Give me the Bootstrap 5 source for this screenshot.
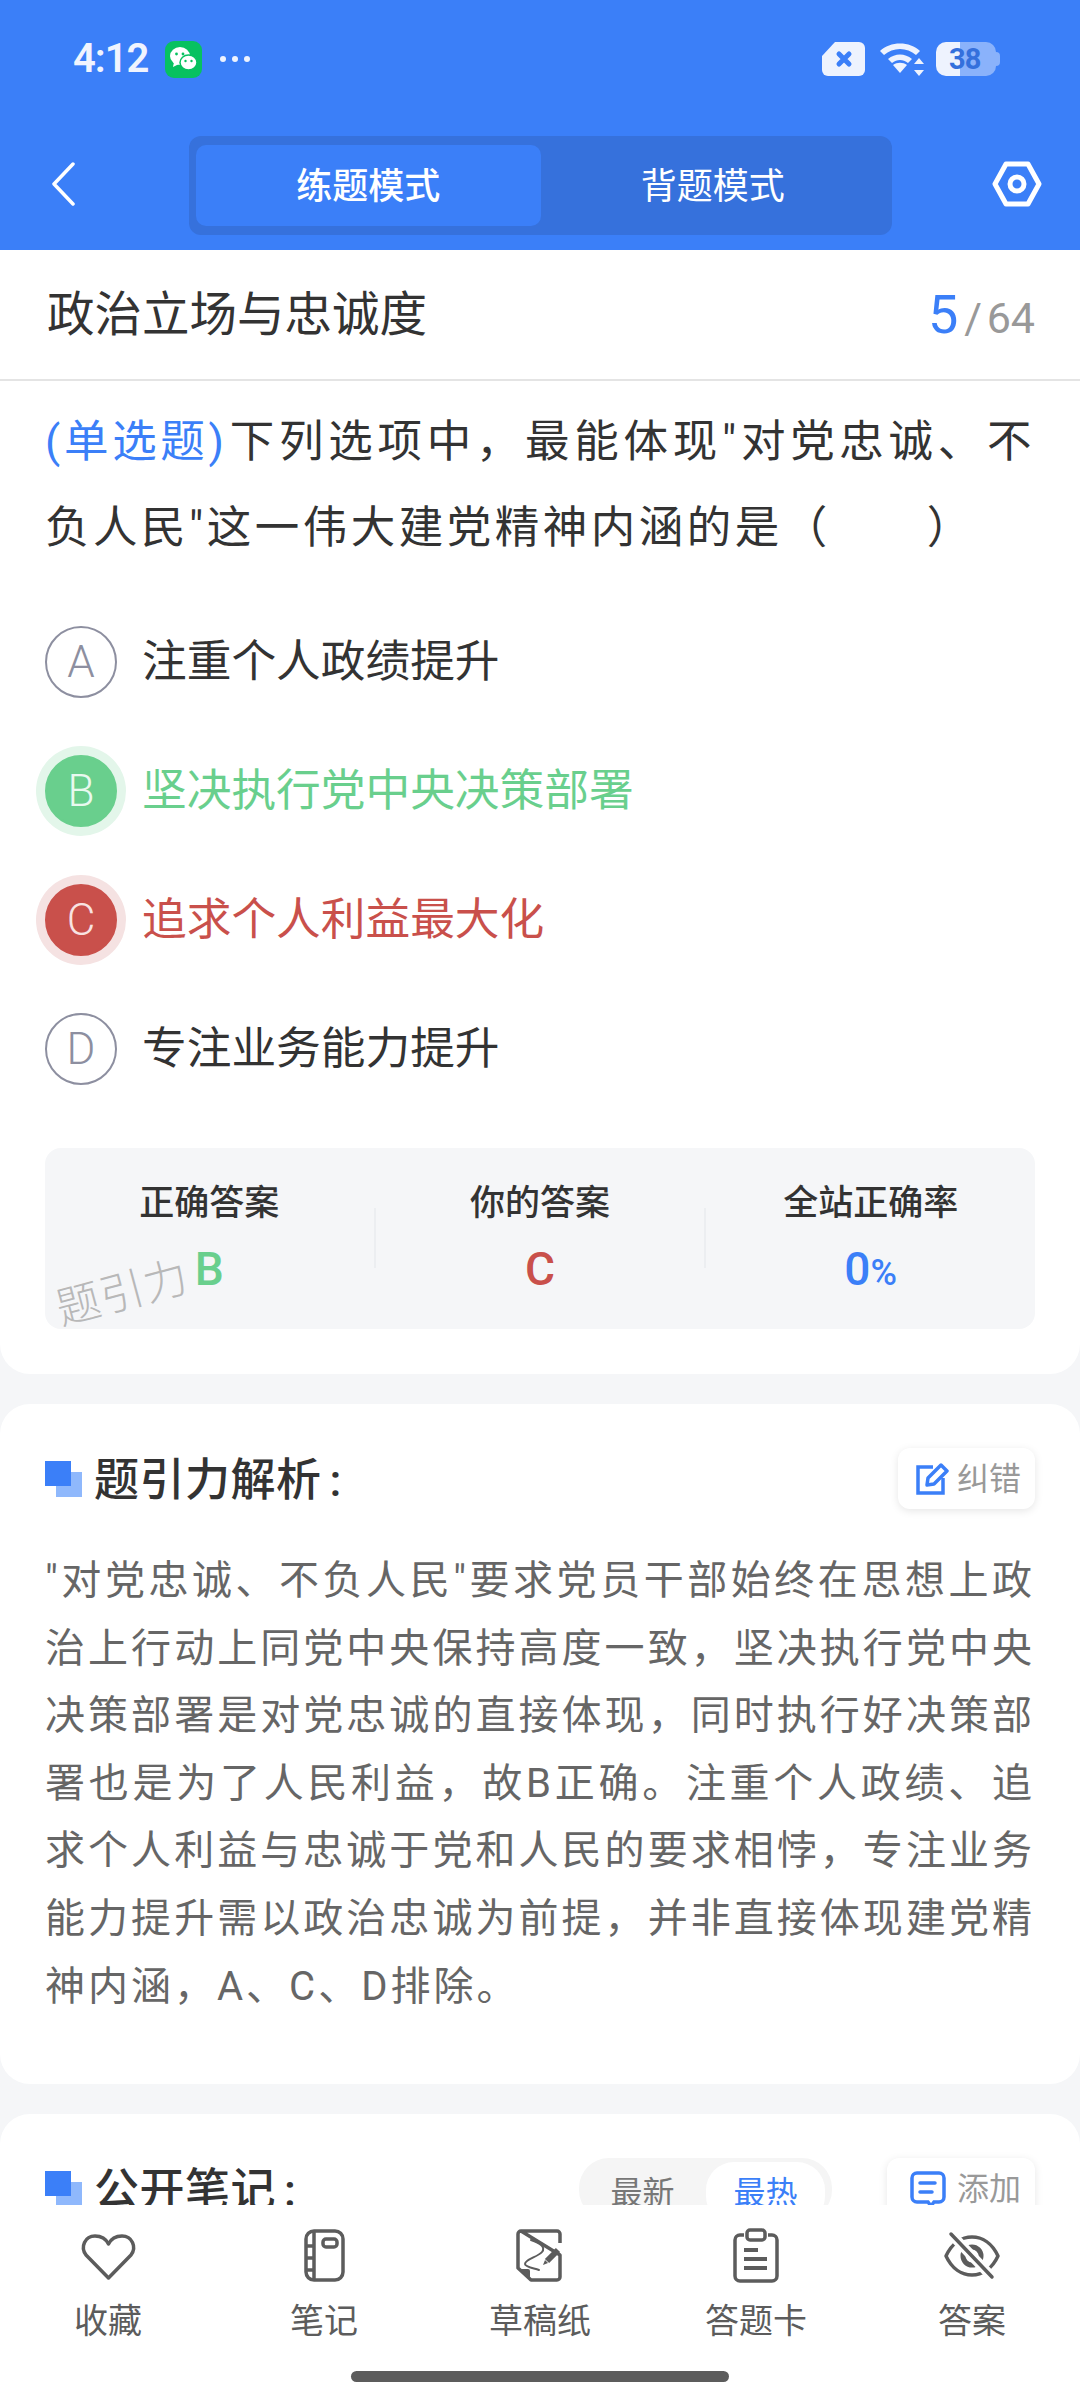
<!DOCTYPE html>
<html lang="zh-CN">
<head>
  <meta charset="UTF-8">
  <title>题引力 - 练题模式</title>
  <link href="https://cdn.jsdelivr.net/npm/bootstrap@5.3.3/dist/css/bootstrap.min.css" rel="stylesheet">
  <style>
    body { background-color: #f5f6f8; color: #333; font-family: Roboto, "Noto Sans CJK SC", sans-serif; height: 2400px; width: 1080px; overflow: hidden; }
    .phone { height: 2400px; }

    /* header */
    .top-head { background-color: #3b7ff8; height: 250px; color: #fff; }
    .status-row { height: 118px; padding: 0 80px 0 73px; }
    .clock { font-size: 40px; font-weight: 600; letter-spacing: -1px; line-height: 1; margin-right: 17px; color: #f0f4fe; }
    .wx-tile { width: 37px; height: 37px; border-radius: 9px; background-color: #07c160; margin-right: 17px; }
    .wifi-ico { margin-left: 13px; }
    .batt-box { width: 60px; height: 34px; margin-left: 12px; border-radius: 10px; background: linear-gradient(90deg, #eef3fe 24px, #8ab2fb 24px); color: #3470dc; font-size: 29px; font-weight: 700; line-height: 34px; letter-spacing: -1px; padding-left: 13px; }
    .batt-nub { width: 4px; height: 14px; background-color: #8ab2fb; border-radius: 0 4px 4px 0; }
    .tool-row { height: 132px; }
    .back-slot { width: 189px; padding-left: 50px; }
    .gear-slot { width: 188px; padding-left: 100px; }
    .mode-seg { width: 703px; height: 99px; margin-top: 3px; padding: 9px 7px; background-color: #3671dc; border-radius: 12px; }
    .mode-tab { font-size: 36px; border-radius: 10px; color: #fff; padding-top: 2px; }
    .mode-on { background-color: #3b7ff8; font-weight: 500; }

    /* question card */
    .quiz-card { background-color: #fff; border-radius: 0 0 30px 30px; padding-bottom: 45px; }
    .topic-row { height: 131px; padding: 0 45px 0 47px; border-bottom: 2px solid #e4e4e4; }
    .topic-name { font-size: 47.500px; line-height: 1; padding-top: 2px; }
    .count-now { font-size: 54px; color: #3b7ff8; }
    .count-all { font-size: 43px; color: #999; margin-left: 6px; word-spacing: -6px; }
    .stem { font-size: 44.500px; line-height: 86px; padding: 18px 45px 0; letter-spacing: 3.500px; text-align: justify; }
    .stem-type { color: #3b7ff8; letter-spacing: 2.500px; margin-right: 2px; }
    .opt-list { margin-top: 26px; padding: 0 45px; }
    .opt-row { height: 129px; font-size: 44.700px; gap: 25px; }
    .opt-text { padding-top: 3px; }
    .opt-dot { width: 72px; height: 72px; border-radius: 50%; border: 2px solid #8d8fa0; color: #8d8fa0; font-size: 44px; font-weight: 300; flex: none; }
    .opt-right { color: #69cf8d; }
    .opt-right .opt-dot { background-color: #69cf8d; border-color: #69cf8d; color: #e9f9ef; box-shadow: 0 0 0 9px #e3f6ea; }
    .opt-wrong { color: #c9504b; }
    .opt-wrong .opt-dot { background-color: #c9504b; border-color: #c9504b; color: #f8e3e2; box-shadow: 0 0 0 9px #f5e2e2; }
    .stat-box { height: 181px; margin: 35px 45px 0; background-color: #f5f6f8; border-radius: 16px; }
    .stat-item { flex: 1 1 0; text-align: center; padding-top: 33px; }
    .stat-label { font-size: 35px; line-height: 46px; font-weight: 500; }
    .stat-value { font-size: 46px; line-height: 46px; margin-top: 19px; font-weight: 500; }
    .stat-rule { width: 2px; height: 60px; margin-top: 60px; background-color: #eceef1; }
    .pct { font-size: 36px; }
    .val-blue { color: #3b7ff8; }
    .val-green { color: #69cf8d; }
    .val-red { color: #c9504b; }
    .watermark { position: absolute; left: 10px; top: 123px; font-size: 44px; line-height: 1; color: #b8b8b8; font-weight: 300; letter-spacing: 1px; transform: rotate(-15deg); }

    /* analysis + notes */
    .info-card { background-color: #fff; border-radius: 30px; margin-top: 30px; padding: 44px 45px 64px; }
    .info-head { height: 61px; }
    .head-mark { position: relative; width: 37px; height: 36px; margin-right: 12px; flex: none; }
    .head-mark::before { content: ""; position: absolute; right: 0; bottom: 0; width: 26px; height: 25px; background-color: #8fb8fc; }
    .head-mark::after { content: ""; position: absolute; left: 0; top: 0; width: 26px; height: 25px; background-color: #3b7ff8; }
    .head-text { font-size: 45px; font-weight: 500; line-height: 1; letter-spacing: 0.500px; padding-top: 3px; }
    .mini-btn { background-color: #fff; border-radius: 12px; box-shadow: 0 2px 8px rgba(0, 0, 0, .1); color: #999; font-size: 32px; height: 61px; padding: 0 14px 0 17px; gap: 8px; }
    .mini-add { padding-left: 23px; gap: 11px; }
    .solve-text { font-size: 40px; line-height: 67.600px; color: #666; margin: 38px 0 0; letter-spacing: 3px; text-align: justify; }
    .sort-pill { background-color: #f5f5f5; border-radius: 30px; height: 62px; padding: 4px 7px 0 0; color: #777; font-size: 32px; margin-right: 55px; }
    .sort-item { width: 127px; height: 62px; border-radius: 28px; }
    .sort-on { width: 119px; background-color: #fff; color: #3b7ff8; }

    /* bottom bar */
    .bottom-bar { background-color: #fff; height: 195px; flex: none; position: relative; }
    .bar-item { flex: 1 1 0; padding-top: 23px; color: #5c5c5c; }
    .bar-icon { display: block; width: 64px; height: 56px; margin: 0 auto; }
    .bar-label { font-size: 34px; line-height: 46px; margin-top: 14px; }
    .home-line { width: 378px; height: 11px; margin: 27px auto 0; background-color: #5c5c5c; border-radius: 6px; }
    .scroll-zone { overflow: hidden; min-height: 0; }
  </style>
</head>
<body>
  <div class="phone d-flex flex-column">

    <!-- Header -->
    <div class="top-head flex-shrink-0">
      <div class="status-row d-flex align-items-center">
        <span class="clock">4:12</span>
        <span class="wx-tile d-flex align-items-center justify-content-center">
          <svg width="29" height="27" viewBox="0 0 29 27"><ellipse cx="11" cy="10" rx="10" ry="9" fill="#fff"/><path d="M5 16l-1 5 6-3z" fill="#fff"/><ellipse cx="19.500" cy="16.500" rx="8.500" ry="7.500" fill="#fff" stroke="#07c160" stroke-width="1.500"/><circle cx="7.500" cy="8" r="1.400" fill="#07c160"/><circle cx="14" cy="8" r="1.400" fill="#07c160"/><circle cx="16.500" cy="15" r="1.200" fill="#07c160"/><circle cx="22.500" cy="15" r="1.200" fill="#07c160"/></svg>
        </span>
        <svg width="32" height="8" viewBox="0 0 32 8"><circle cx="4" cy="4" r="3" fill="#eef3fe"/><circle cx="16" cy="4" r="3" fill="#eef3fe"/><circle cx="28" cy="4" r="3" fill="#eef3fe"/></svg>
        <span class="ms-auto d-flex align-items-center">
          <svg width="43" height="34" viewBox="0 0 43 34"><path d="M13 0H37a6 6 0 0 1 6 6V28a6 6 0 0 1-6 6H6a6 6 0 0 1-6-6V14z" fill="#eef3fe"/><path d="M16 11l10 10M26 11l-10 10" stroke="#3b7ff8" stroke-width="5" stroke-linecap="round" transform="translate(1 1)"/></svg>
          <svg class="wifi-ico" width="46" height="34" viewBox="0 0 46 34"><path d="M2 9C12-1 32-1 42 9l-4 4C29 5 15 5 6 13z" fill="#eef3fe"/><path d="M10 17c7-6 17-6 24 0l-4 4c-5-4-11-4-16 0z" fill="#eef3fe"/><path d="M15 23c4-3 10-3 14 0l-7 8z" fill="#eef3fe"/><path d="M41 16l5 6H36zM41 34l5-6H36z" fill="#eef3fe"/></svg>
          <span class="batt-box">38</span><span class="batt-nub"></span>
        </span>
      </div>
      <div class="tool-row d-flex align-items-center">
        <div class="back-slot">
          <svg width="26" height="44" viewBox="0 0 26 44" class="d-block"><path d="M23 2L4 22l19 20" fill="none" stroke="#fff" stroke-width="3.500" stroke-linecap="round" stroke-linejoin="round"/></svg>
        </div>
        <div class="mode-seg d-flex">
          <div class="mode-tab mode-on flex-fill w-50 d-flex align-items-center justify-content-center">练题模式</div>
          <div class="mode-tab flex-fill w-50 d-flex align-items-center justify-content-center">背题模式</div>
        </div>
        <div class="gear-slot">
          <svg width="50" height="46" viewBox="0 0 50 46" class="d-block"><path d="M14 3H36L47 23 36 43H14L3 23z" fill="none" stroke="#fff" stroke-width="5" stroke-linejoin="round"/><circle cx="25" cy="23" r="7" fill="none" stroke="#fff" stroke-width="5"/></svg>
        </div>
      </div>
    </div>

    <!-- Scrolling content -->
    <div class="scroll-zone flex-grow-1">
      <div class="quiz-card">
        <div class="topic-row d-flex align-items-center justify-content-between">
          <div class="topic-name">政治立场与忠诚度</div>
          <div><span class="count-now">5</span><span class="count-all">/ 64</span></div>
        </div>
        <div class="stem"><span class="stem-type">(单选题)</span>下列选项中，最能体现"对党忠诚、不负人民"这一伟大建党精神内涵的是（　　）</div>
        <div class="opt-list">
          <div class="opt-row d-flex align-items-center"><span class="opt-dot d-flex align-items-center justify-content-center">A</span><span class="opt-text">注重个人政绩提升</span></div>
          <div class="opt-row opt-right d-flex align-items-center"><span class="opt-dot d-flex align-items-center justify-content-center">B</span><span class="opt-text">坚决执行党中央决策部署</span></div>
          <div class="opt-row opt-wrong d-flex align-items-center"><span class="opt-dot d-flex align-items-center justify-content-center">C</span><span class="opt-text">追求个人利益最大化</span></div>
          <div class="opt-row d-flex align-items-center"><span class="opt-dot d-flex align-items-center justify-content-center">D</span><span class="opt-text">专注业务能力提升</span></div>
        </div>
        <div class="stat-box d-flex position-relative">
          <div class="stat-item"><div class="stat-label">正确答案</div><div class="stat-value val-green">B</div></div>
          <div class="stat-rule"></div>
          <div class="stat-item"><div class="stat-label">你的答案</div><div class="stat-value val-red">C</div></div>
          <div class="stat-rule"></div>
          <div class="stat-item"><div class="stat-label">全站正确率</div><div class="stat-value val-blue">0<span class="pct">%</span></div></div>
          <div class="watermark">题引力</div>
        </div>
      </div>

      <div class="info-card">
        <div class="info-head d-flex align-items-center">
          <span class="head-mark"></span>
          <span class="head-text">题引力解析<span class="ms-2">:</span></span>
          <span class="mini-btn d-flex align-items-center ms-auto">
            <svg width="34" height="34" viewBox="0 0 34 34"><path d="M18 5H3V31H28V16" fill="none" stroke="#3b7ff8" stroke-width="3.500"/><path d="M12 23l1-7L26 3l6 6-13 13z" fill="none" stroke="#3b7ff8" stroke-width="3.500" stroke-linejoin="round"/></svg>
            纠错
          </span>
        </div>
        <p class="solve-text">"对党忠诚、不负人民"要求党员干部始终在思想上政治上行动上同党中央保持高度一致，坚决执行党中央决策部署是对党忠诚的直接体现，同时执行好决策部署也是为了人民利益，故B正确。注重个人政绩、追求个人利益与忠诚于党和人民的要求相悖，专注业务能力提升需以政治忠诚为前提，并非直接体现建党精神内涵，A、C、D排除。</p>
      </div>

      <div class="info-card">
        <div class="info-head d-flex align-items-center">
          <span class="head-mark"></span>
          <span class="head-text">公开笔记<span class="ms-2">:</span></span>
          <span class="sort-pill d-flex ms-auto">
            <span class="sort-item d-flex align-items-center justify-content-center">最新</span>
            <span class="sort-item sort-on d-flex align-items-center justify-content-center">最热</span>
          </span>
          <span class="mini-btn mini-add d-flex align-items-center">
            <svg width="36" height="36" viewBox="0 0 36 36"><path d="M7 2H29a5 5 0 0 1 5 5V26a5 5 0 0 1-5 5H24l-3 4-3-4H7a5 5 0 0 1-5-5V7a5 5 0 0 1 5-5z" fill="none" stroke="#3b7ff8" stroke-width="3.500"/><path d="M10 12H25M10 21H22" stroke="#3b7ff8" stroke-width="3.500" stroke-linecap="round"/></svg>
            添加
          </span>
        </div>
      </div>
    </div>

    <!-- Bottom bar -->
    <div class="bottom-bar">
      <div class="d-flex">
        <div class="bar-item text-center">
          <svg class="bar-icon" viewBox="0 0 64 56"><path d="M32.500 50L10 27C4 19 9 8 19 8c6 0 11 3 13.500 8C35 11 40 8 46 8c10 0 15 11 9 19z" fill="none" stroke="#5c5c5c" stroke-width="3.500" stroke-linejoin="round"/></svg>
          <div class="bar-label">收藏</div>
        </div>
        <div class="bar-item text-center">
          <svg class="bar-icon" viewBox="0 0 64 56" fill="none" stroke="#5c5c5c" stroke-width="3.500"><rect x="14" y="3" width="37" height="49" rx="8"/><path d="M22 3V52M14 18H22M14 30H22M14 42H22"/><rect x="31" y="11" width="14" height="8" rx="3"/></svg>
          <div class="bar-label">笔记</div>
        </div>
        <div class="bar-item text-center">
          <svg class="bar-icon" viewBox="0 0 64 56" fill="none" stroke="#5c5c5c" stroke-width="3.500"><path d="M13 3H49a3 3 0 0 1 3 3V15M52 27V49a3 3 0 0 1-3 3H23L10 40V6a3 3 0 0 1 3-3z" stroke-linejoin="round"/><path d="M11 41H20a2 2 0 0 1 2 2V51z" fill="#5c5c5c" stroke="none"/><path d="M23 12C32 15 38 19 34 24 30 29 17 31 17 36c0 3 8 4 14 6" stroke-width="2" stroke-linecap="round"/><path d="M39 33L50 22" stroke-width="6"/><path d="M37 32l3 3-5 2z" fill="#5c5c5c" stroke="none"/></svg>
          <div class="bar-label">草稿纸</div>
        </div>
        <div class="bar-item text-center">
          <svg class="bar-icon" viewBox="0 0 64 56" fill="none" stroke="#5c5c5c" stroke-width="3.500"><path d="M20 7H16a5 5 0 0 0-5 5V48a5 5 0 0 0 5 5H48a5 5 0 0 0 5-5V12a5 5 0 0 0-5-5H44"/><rect x="23" y="2" width="18" height="10" rx="3"/><path d="M20 22H34M20 31H43M20 40H43" stroke-width="4"/></svg>
          <div class="bar-label">答题卡</div>
        </div>
        <div class="bar-item text-center">
          <svg class="bar-icon" viewBox="0 0 64 56" fill="none" stroke="#5c5c5c" stroke-width="3.500"><path d="M6 28C12 15 22 9 32 9s20 6 26 19C52 41 42 47 32 47S12 41 6 28z" stroke-linejoin="round"/><circle cx="32" cy="28" r="9" stroke-width="5"/><path d="M11 6L52 49" stroke="#fff" stroke-width="10"/><path d="M11 6L52 49" stroke-width="3.500" stroke-linecap="round"/></svg>
          <div class="bar-label">答案</div>
        </div>
      </div>
      <div class="home-line"></div>
    </div>
  </div>

  <script src="https://cdn.jsdelivr.net/npm/bootstrap@5.3.3/dist/js/bootstrap.bundle.min.js"></script>
</body>
</html>
